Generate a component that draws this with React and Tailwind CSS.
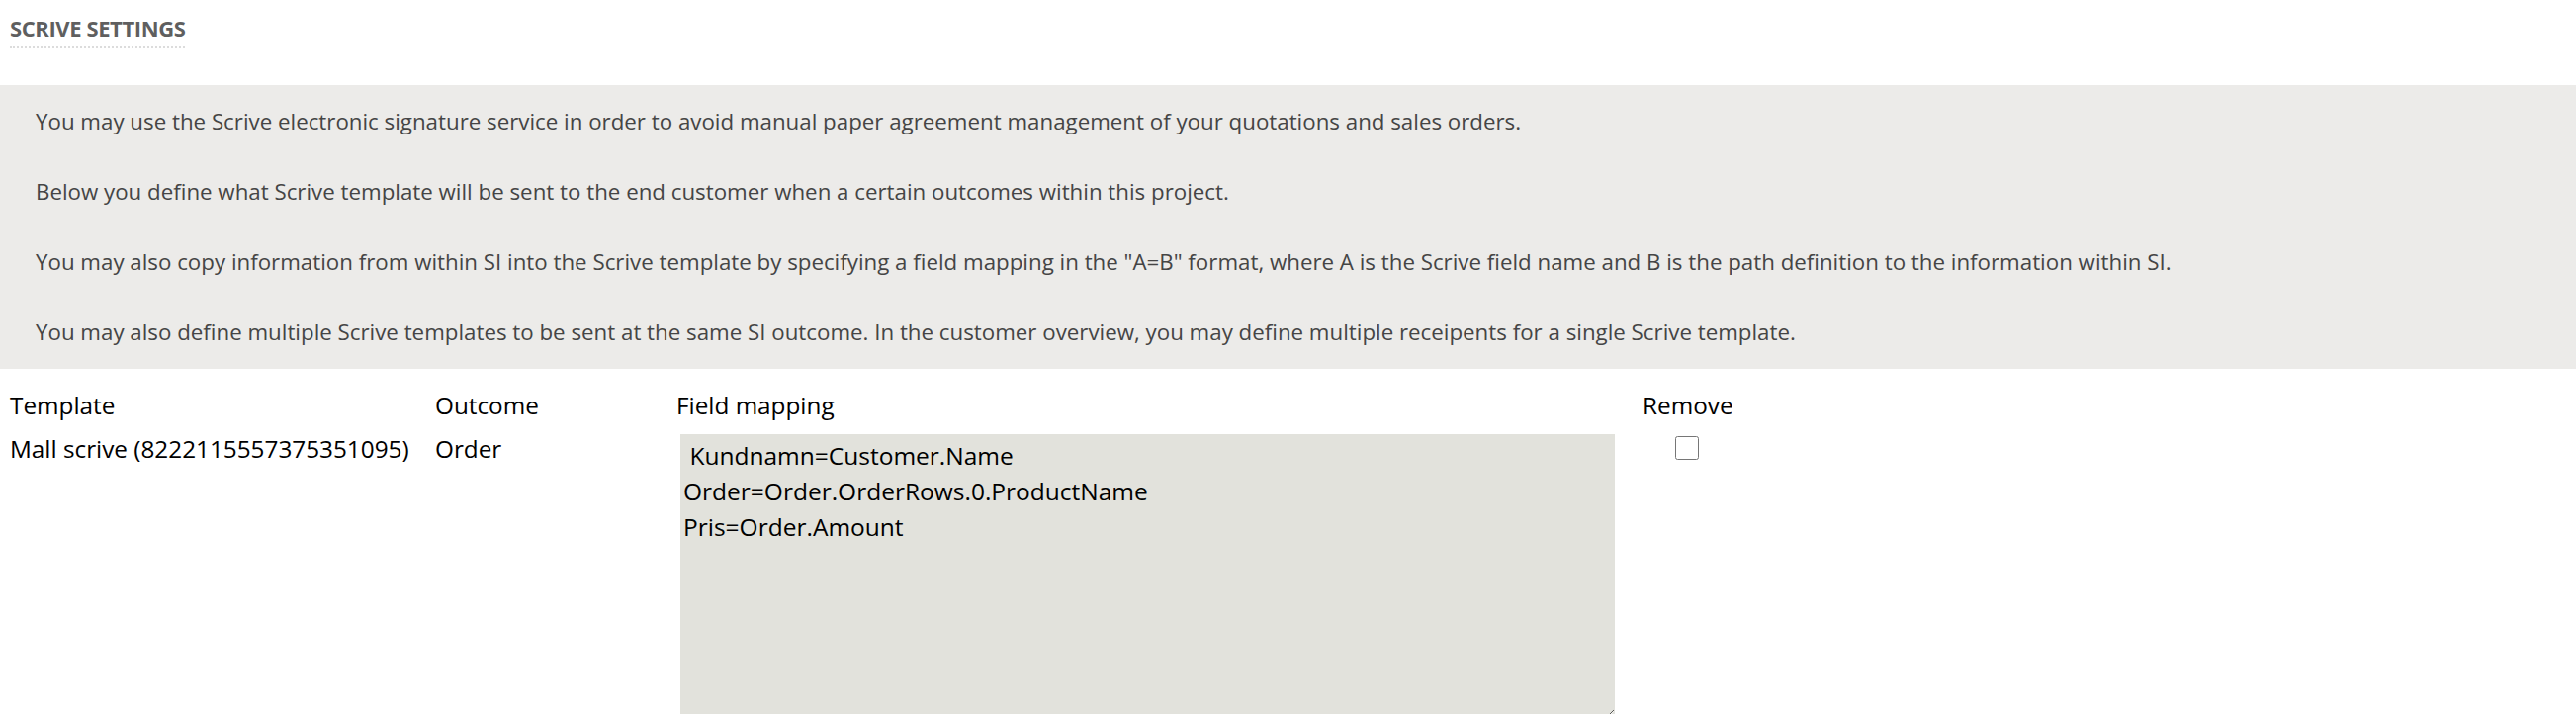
import React from 'react';

const paragraphs = [
  'You may use the Scrive electronic signature service in order to avoid manual paper agreement management of your quotations and sales orders.',
  'Below you define what Scrive template will be sent to the end customer when a certain outcomes within this project.',
  'You may also copy information from within SI into the Scrive template by specifying a field mapping in the "A=B" format, where A is the Scrive field name and B is the path definition to the information within SI.',
  'You may also define multiple Scrive templates to be sent at the same SI outcome. In the customer overview, you may define multiple receipents for a single Scrive template.',
];

const rows = [
  {
    template: 'Mall scrive (8222115557375351095)',
    outcome: 'Order',
    mapping: ' Kundnamn=Customer.Name\nOrder=Order.OrderRows.0.ProductName\nPris=Order.Amount',
  },
];

const App = () => {
  return (
    <div className="min-h-screen bg-white font-['Open_Sans',sans-serif]">
      <div className="pt-[14px] pl-[10px]">
        <h2 className="inline-block border-b-2 border-dotted border-[#dcdcdc] pb-[5px] text-[22px] font-bold leading-[28px] text-[#5f5f5f] tracking-[-0.4px]">
          SCRIVE SETTINGS
        </h2>
      </div>

      <div className="mt-[37px] bg-[#ecebe9] pt-[21px] pb-[21px] pl-[36px] pr-4 flex flex-col gap-[39px]">
        {paragraphs.map((text, i) => (
          <p key={i} className="text-[22.3px] leading-[32px] text-[#454545]">
            {text}
          </p>
        ))}
      </div>

      <table className="mt-[19px] ml-[10px] border-collapse text-[24.3px] text-black">
        <thead>
          <tr>
            <th className="w-[430px] p-0 text-left font-normal leading-[36px] align-top">Template</th>
            <th className="w-[244px] p-0 text-left font-normal leading-[36px] align-top">Outcome</th>
            <th className="w-[977px] p-0 text-left font-normal leading-[36px] align-top">Field mapping</th>
            <th className="p-0 text-left font-normal leading-[36px] align-top">Remove</th>
          </tr>
        </thead>
        <tbody>
          {rows.map((row, i) => (
            <tr key={i}>
              <td className="align-top p-0 pt-[8px] leading-[36px] whitespace-nowrap">{row.template}</td>
              <td className="align-top p-0 pt-[8px] leading-[36px]">{row.outcome}</td>
              <td className="align-top p-0 pt-[11px]">
                <textarea
                  defaultValue={row.mapping}
                  className="ml-[4px] block w-[945px] h-[287px] bg-[#e2e2dc] px-[3px] pt-[4px] text-[24.5px] leading-[36px] text-black outline-none resize-y font-['Open_Sans',sans-serif]"
                />
              </td>
              <td className="align-top p-0 pt-[13px]">
                <input
                  type="checkbox"
                  className="ml-[33px] block w-[24px] h-[24px]"
                />
              </td>
            </tr>
          ))}
        </tbody>
      </table>
    </div>
  );
};

export default App;
